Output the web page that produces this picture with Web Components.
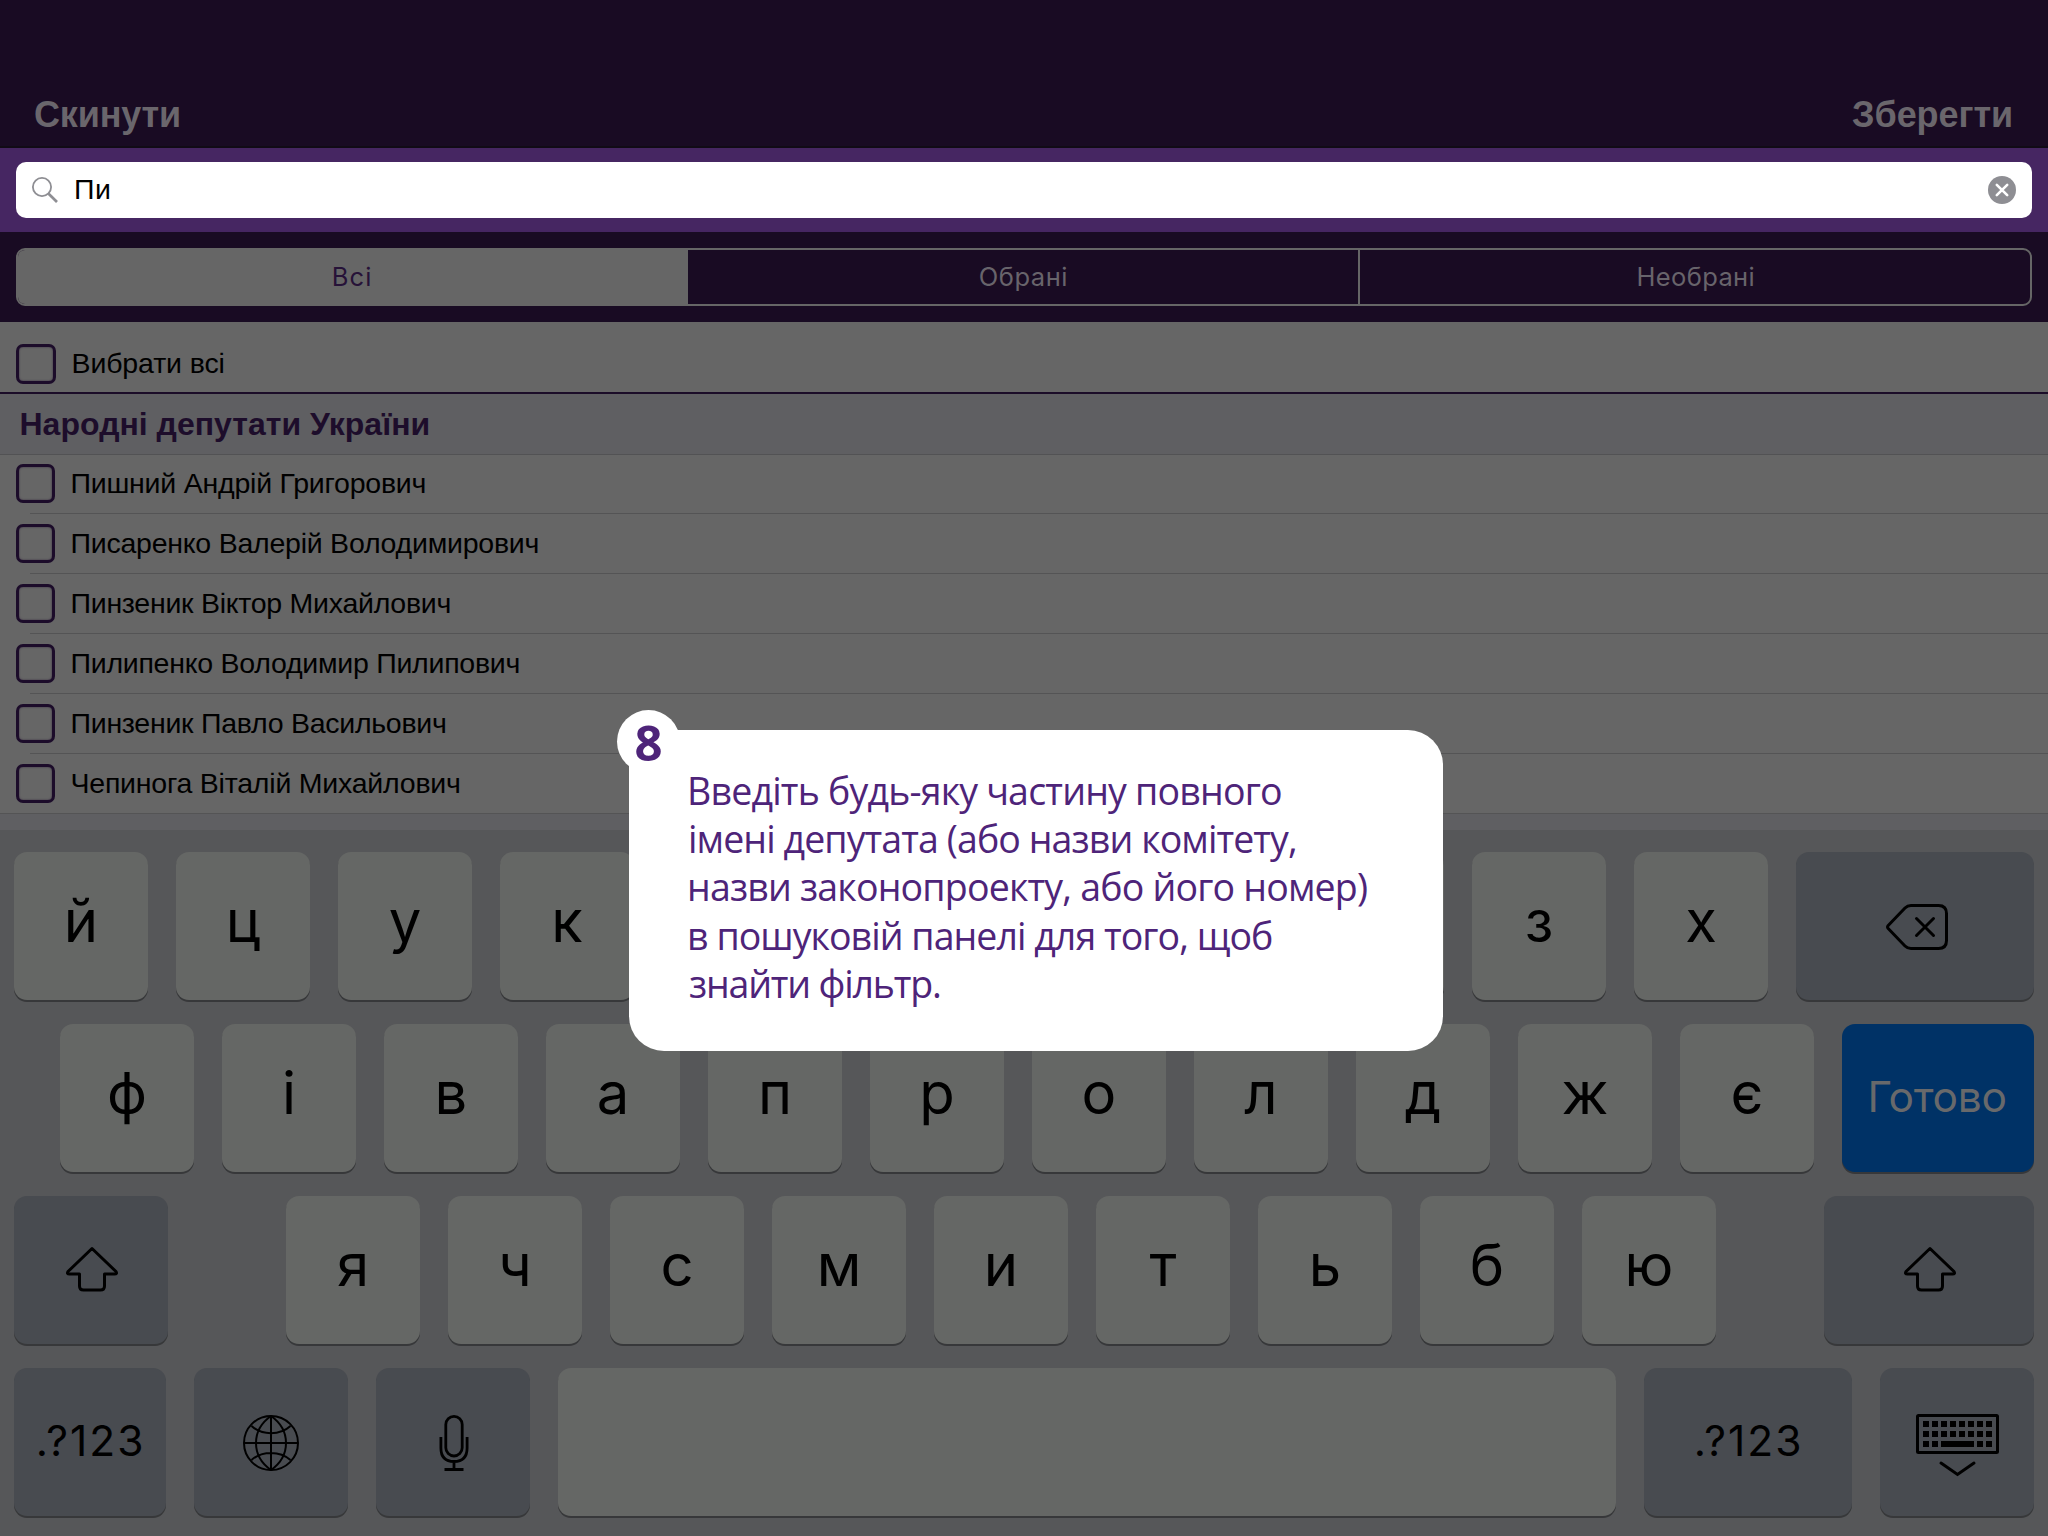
<!DOCTYPE html>
<html lang="uk">
<head>
<meta charset="utf-8">
<title>Фільтр</title>
<style>
html,body{margin:0;padding:0;width:2048px;height:1536px;overflow:hidden;background:#666}
</style>
</head>
<body>
<filter-app></filter-app>
<script>
const define = (name, html, setup) => {
  const t = document.createElement('template');
  t.innerHTML = html;
  customElements.define(name, class extends HTMLElement {
    connectedCallback() {
      if (this.shadowRoot) return;
      this.attachShadow({mode: 'open'}).appendChild(t.content.cloneNode(true));
      if (setup) setup(this, this.shadowRoot);
    }
  });
};

/* A single line of text whose inked width is set by the "ink" attribute */
define('text-run', `<style>
:host{display:block;white-space:pre;flex:none}
</style><slot></slot>`, (host) => {
  const text = host.textContent, cs = getComputedStyle(host);
  const c = document.createElement('canvas').getContext('2d');
  c.font = cs.fontWeight + ' ' + cs.fontSize + ' ' + cs.fontFamily;
  const m = c.measureText(text);
  const ink = +host.getAttribute('ink');
  if (ink) {
    const gap = (ink - m.actualBoundingBoxLeft - m.actualBoundingBoxRight) / (text.length - 1);
    host.style.letterSpacing = gap.toFixed(3) + 'px';
    host.style.width = ink + 'px';
    host.style.textIndent = m.actualBoundingBoxLeft.toFixed(2) + 'px';
  }
});

define('nav-bar', `<style>
:host{display:flex;justify-content:space-between;box-sizing:border-box;height:148px;padding:95px 37px 0 35px;background:#190b23;border-bottom:2px solid #110b16;
font:bold 36px/39px "Liberation Sans",Arial,sans-serif;color:#6a666c}
</style><text-run ink="144">Скинути</text-run><text-run ink="159">Зберегти</text-run>`);

define('search-bar', `<style>
:host{display:block;box-sizing:border-box;height:84px;padding:14px 16px;background:#462662}
.field{display:flex;box-sizing:border-box;height:56px;border-radius:10px;background:#fff;padding:0 16px;
font:28.5px/55px "Liberation Sans",Arial,sans-serif;color:#000}
.glass{margin:15px 18px 0 0;width:26px;height:26px;overflow:visible}
.clear{margin:14px 0 0 auto;width:28px;height:28px}
</style><div class="field">
<svg class="glass" viewBox="0 0 26 26" fill="none" stroke="#8e8e93"><circle cx="10" cy="10" r="9.1" stroke-width="1.8"/><path d="M16.600 16.800 25 25" stroke-width="2.700"/></svg>
<text-run ink="33">Пи</text-run>
<svg class="clear" viewBox="0 0 28 28"><circle cx="14" cy="14" r="14" fill="#8e8e93"/><path d="M8.800 8.800 19.200 19.200M19.200 8.800 8.800 19.200" stroke="#fff" stroke-width="2.600" stroke-linecap="round"/></svg>
</div>`);

define('segment-control', `<style>
:host{display:block;box-sizing:border-box;height:90px;padding:16px;background:#190b23}
.box{display:flex;box-sizing:border-box;height:58px;border:2px solid #666;border-radius:9px;overflow:hidden;
font:25.5px/54.5px Inter,sans-serif;color:#68646b}
.s{display:flex;justify-content:center;flex:none;box-sizing:border-box;width:672px;border-left:2px solid #666}
.s:first-child{width:668px;border-left:0;background:#666;color:#261238}
.s:last-child{padding-left:2px}
</style><div class="box">
<div class="s"><text-run ink="36.5">Всі</text-run></div>
<div class="s"><text-run ink="86.5">Обрані</text-run></div>
<div class="s"><text-run ink="115">Необрані</text-run></div></div>`);

define('check-box', `<style>
:host{display:block;flex:none;box-sizing:border-box;width:39px;height:39px;border:3px solid #1c0c2a;border-radius:7px;background:#666;box-shadow:inset 0 0 2px #35263f}
</style>`);

define('check-row', `<style>
:host{display:flex;box-sizing:border-box;height:60px;padding:0 0 0 16px;font:28.5px/59px "Liberation Sans",Arial,sans-serif;color:#000;
background:linear-gradient(#545455,#545455) 30px 100%/100% 1px no-repeat}
check-box{margin:10px 17.500px 0 0}
:host([last]){background-position:0 100%}
:host([all]){height:72px;line-height:83px;background:none;border-bottom:2px solid #1b0c28}
:host([all]) check-box{width:40px;height:40px;margin-top:22px}
</style><check-box></check-box><slot></slot>`);

define('section-title', `<style>
:host{display:block;position:relative;box-sizing:border-box;height:61px;margin-bottom:-1px;padding-left:21.500px;background:#5f5f62;border-bottom:1px solid #525254;
font:bold 32px/60px "Liberation Sans",Arial,sans-serif;color:#1d0d2b}
</style><slot></slot>`);

define('deputy-list', `<style>
:host{display:block;height:508px;background:#5f5f62}
.rows{background:#666}
</style><div class="rows">
<check-row all><text-run ink="150">Вибрати всі</text-run></check-row>
<section-title><text-run ink="407">Народні депутати України</text-run></section-title>
<check-row><text-run ink="352">Пишний Андрій Григорович</text-run></check-row>
<check-row><text-run ink="465">Писаренко Валерій Володимирович</text-run></check-row>
<check-row><text-run ink="377">Пинзеник Віктор Михайлович</text-run></check-row>
<check-row><text-run ink="446">Пилипенко Володимир Пилипович</text-run></check-row>
<check-row><text-run ink="372.500">Пинзеник Павло Васильович</text-run></check-row>
<check-row last><text-run ink="386.500">Чепинога Віталій Михайлович</text-run></check-row>
</div>`);

define('kb-key', `<style>
:host{display:flex;justify-content:center;flex:none;box-sizing:border-box;width:134px;height:148px;border-radius:13px;background:#656765;
box-shadow:0 2px 0 #37383a;font:58px/138px Inter,sans-serif;color:#000}
:host([dark]){background:#484b50;font-size:42.500px;line-height:145px}
:host([done]){background:#003266;color:#68696b;font-size:42.500px;line-height:145px}
</style><slot></slot>`);

define('kb-icon', `<style>
:host{display:block;line-height:0}
svg{display:block;fill:none;stroke:#000;overflow:visible}
</style>`, (host, root) => {
  const icons = {
    back: [62, 46, 52, 4, '<path stroke-width="3" stroke-linejoin="round" d="M25 1.500H52.500Q60.500 1.500 60.500 9.500V36.500Q60.500 44.500 52.500 44.500H25Q21.500 44.500 19 42L2.200 24.500Q.9 23 2.200 21.500L19 4Q21.500 1.500 25 1.500Z"/><path stroke-width="3" stroke-linecap="round" d="M30.500 14.500 47.500 31.500M47.500 14.500 30.500 31.500"/>'],
    shift: [52, 46, 50, 2, '<path stroke-width="3" stroke-linejoin="round" d="M26 2.500 50 25.500Q51.500 28 48.500 28H38.500V40Q38.500 44 34.500 44H17.500Q13.500 44 13.500 40V28H3.500Q.5 28 2 25.500Z"/>'],
    globe: [56, 56, 47, 0, '<g stroke-width="2"><circle cx="28" cy="28" r="27"/><path d="M28 1V55M1 28H55M28 1C8 15 8 41 28 55M28 1C48 15 48 41 28 55M8.500 11C19 20.500 37 20.500 47.500 11M8.500 45C19 35.500 37 35.500 47.500 45"/></g>'],
    mic: [30, 56, 47, 1, '<rect x="6.800" y="1.400" width="16.400" height="39.600" rx="8.200" stroke-width="2.800"/><path stroke-width="2.800" d="M1.900 22V33Q1.900 46.500 15 46.500T28.100 33V22M15 46.500V54.500M5.500 54.500H24.500"/>'],
    hide: [84, 64, 46, 1, '<rect x="1.500" y="1.500" width="80" height="37" rx="1" stroke-width="3"/><path stroke-width="6" stroke-dasharray="6 3" d="M7 10H76M7 20H76"/><path stroke-width="6" d="M7 30H13M16 30H22M25 30H58M61 30H67M70 30H76"/><path stroke-width="3" stroke-linecap="round" d="M25 49 41.500 60.500 58 49"/>']
  };
  const [w, h, top, left, body] = icons[host.getAttribute('name')];
  host.style.margin = top + 'px 0 0 ' + left + 'px';
  root.innerHTML += `<svg width="${w}" height="${h}" viewBox="0 0 ${w} ${h}">${body}</svg>`;
});

define('cyrillic-keyboard', `<style>
:host{display:flex;flex-direction:column;gap:24px;box-sizing:border-box;height:706px;padding:22px 14px 0;background:#565759}
.r{display:flex;gap:28px;height:148px}
.two{padding-left:46px}
</style>
<div class="r one"></div>
<div class="r two"></div>
<div class="r three"></div>
<div class="r four"><kb-key dark style="width:152px"><text-run ink="102.5">.?123</text-run></kb-key><kb-key dark style="width:154px"><kb-icon name="globe"></kb-icon></kb-key><kb-key dark style="width:154px"><kb-icon name="mic"></kb-icon></kb-key><kb-key style="width:1058px"></kb-key><kb-key dark style="width:208px"><text-run ink="102.5">.?123</text-run></kb-key><kb-key dark style="width:154px"><kb-icon name="hide"></kb-icon></kb-key></div>`, (host, root) => {
  const keys = s => [...s].map(l => `<kb-key>${l.trim()}</kb-key>`).join('');
  root.querySelector('.one').innerHTML = keys('йцук     зх') + '<kb-key dark style="width:238px"><kb-icon name="back"></kb-icon></kb-key>';
  root.querySelector('.two').innerHTML = keys('фівапролджє') + '<kb-key done style="width:192px"><text-run ink="135">Готово</text-run></kb-key>';
  root.querySelector('.three').innerHTML = '<kb-key dark style="width:154px;margin-right:90px"><kb-icon name="shift"></kb-icon></kb-key>' + keys('ячсмитьбю') + '<kb-key dark style="width:210px;margin-left:80px"><kb-icon name="shift"></kb-icon></kb-key>';
});

define('hint-callout', `<style>
:host{position:absolute;left:629px;top:730px;display:block;box-sizing:border-box;width:814px;height:321px;padding:37px 60px 0 61px;border-radius:35px;background:#fff;
font:37.500px/48.200px "Open Sans","Noto Sans",sans-serif;color:#4e2479}
.num{position:absolute;left:-12px;top:-20px;display:flex;justify-content:center;width:63px;height:63px;border-radius:50%;background:#fff;
font-weight:bold;font-size:49px;line-height:64px}
</style><div class="num">8</div>
<text-run ink="591">Введіть будь-яку частину повного</text-run>
<text-run ink="605">імені депутата (або назви комітету,</text-run>
<text-run ink="677">назви законопроекту, або його номер)</text-run>
<text-run ink="582">в пошуковій панелі для того, щоб</text-run>
<text-run ink="250">знайти фільтр.</text-run>`);

define('filter-app', `<style>
:host{display:block;position:relative;width:2048px;height:1536px;overflow:hidden}
</style><nav-bar></nav-bar><search-bar></search-bar><segment-control></segment-control><deputy-list></deputy-list><cyrillic-keyboard></cyrillic-keyboard><hint-callout></hint-callout>`);
</script>
</body>
</html>
